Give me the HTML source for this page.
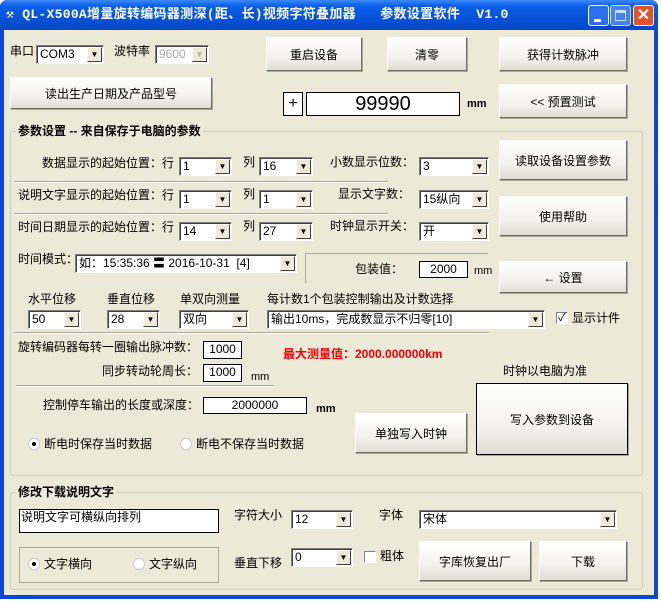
<!DOCTYPE html>
<html><head><meta charset="utf-8"><style>
*{box-sizing:border-box;margin:0;padding:0}
body{width:661px;height:601px;overflow:hidden;background:#fff;font-family:"Liberation Sans","Noto Sans CJK SC",sans-serif;font-size:12px;color:#000;position:relative}
.win{position:absolute;left:0;top:0;width:658px;height:599px;background:#0a47d6;border-radius:7px 7px 0 0}
.title{position:absolute;left:0;top:0;width:658px;height:30px;border-radius:7px 7px 0 0;background:linear-gradient(#3d8af7 0%,#0a5fe9 20%,#0752d8 60%,#0a47c8 100%)}
.body{position:absolute;left:4px;top:30px;width:650px;height:565px;background:#ece9d8}
.a{position:absolute;white-space:nowrap;line-height:14px;font-size:12px}
.btn{position:absolute;background:linear-gradient(#fff,#f3f2ec 60%,#e0ded3);border:1px solid #7f9db9;border-color:#fff #716f64 #716f64 #fff;box-shadow:1px 1px 0 #aca899;display:flex;align-items:center;justify-content:center;font-size:12px}
.cb{position:absolute;height:19px;background:#fff;border:1px solid;border-color:#7f7f7f #fff #fff #7f7f7f;box-shadow:inset 1px 1px 0 #404040;font-size:12px;line-height:16px;padding-left:3px;overflow:hidden}
.cb i{position:absolute;right:1px;top:1px;width:15px;height:15px;background:#ece9d8;border:1px solid;border-color:#fff #404040 #404040 #fff;font-style:normal;font-size:8px;text-align:center;line-height:13px}
.in{position:absolute;background:#fff;border:1px solid #000;text-align:center;font-size:12px;line-height:15px}
.grp{position:absolute;border:1px solid #d0d0bf;border-radius:3px}
.gt{position:absolute;background:#ece9d8;font-weight:bold;font-size:12px;padding:0 2px;line-height:14px}
.sep{position:absolute;height:2px;border-top:1px solid #aca899;border-bottom:1px solid #fff}
.rad{position:absolute;width:12px;height:12px;border-radius:50%;background:#fff;border:1px solid #ccc}
.rad.on::after{content:"";position:absolute;left:3px;top:3px;width:4px;height:4px;border-radius:50%;background:#000}
.chk{position:absolute;width:12px;height:12px;background:#fff;border:1px solid;border-color:#808080 #fff #fff #808080;font-size:11px;line-height:10px;text-align:center}
</style></head><body>
<div class="win"></div>
<div class="title"></div>
<div class="a" style="left:6px;top:8px;color:#fff;font-size:13px;font-weight:bold;letter-spacing:0.3px;font-family:'Liberation Mono','Noto Sans CJK SC',monospace">⚒ QL-X500A增量旋转编码器测深(距、长)视频字符叠加器&nbsp;&nbsp;&nbsp;参数设置软件&nbsp;&nbsp;V1.0</div>
<div style="position:absolute;left:588px;top:5px;width:21px;height:21px;border:1px solid #fff;border-radius:3px;background:#2b6ff0"><div style="position:absolute;left:5px;top:13px;width:7px;height:3px;background:#fff"></div></div>
<div style="position:absolute;left:610px;top:5px;width:21px;height:21px;border:1px solid #fff;border-radius:3px;background:#5a8df5;opacity:.8"><div style="position:absolute;left:4px;top:4px;width:11px;height:11px;border:1px solid #fff;border-top-width:3px"></div></div>
<div style="position:absolute;left:633px;top:5px;width:21px;height:21px;border:1px solid #fff;border-radius:3px;background:#e0542c;color:#fff;font-weight:bold;font-size:16px;text-align:center;line-height:19px">✕</div>
<div class="body"></div>

<div class="a" style="left:10px;top:44px">串口</div>
<div class="cb" style="left:36px;top:45px;width:68px">COM3<i>▼</i></div>
<div class="a" style="left:114px;top:44px">波特率</div>
<div class="cb" style="left:155px;top:45px;width:54px;color:#aaa;background:#fff">9600<i style="color:#aaa">▼</i></div>
<div class="btn" style="left:266px;top:37px;width:96px;height:34px">重启设备</div>
<div class="btn" style="left:387px;top:37px;width:80px;height:34px">清零</div>
<div class="btn" style="left:499px;top:37px;width:128px;height:34px">获得计数脉冲</div>
<div class="btn" style="left:10px;top:77px;width:202px;height:32px">读出生产日期及产品型号</div>
<div class="in" style="left:283px;top:92px;width:20px;height:24px;font-size:16px;line-height:21px">+</div>
<div class="in" style="left:306px;top:92px;width:154px;height:24px;font-size:20px;line-height:22px">99990</div>
<div class="a" style="left:467px;top:97px;font-weight:bold;font-size:11px">mm</div>
<div class="btn" style="left:499px;top:84px;width:128px;height:34px">&lt;&lt; 预置测试</div>

<div class="grp" style="left:10px;top:131px;width:633px;height:345px"></div>
<div class="gt" style="left:16px;top:124px">参数设置 -- 来自保存于电脑的参数</div>

<div class="a" style="left:42px;top:156px">数据显示的起始位置：行</div>
<div class="cb" style="left:179px;top:157px;width:53px">1<i>▼</i></div>
<div class="a" style="left:243px;top:155px">列</div>
<div class="cb" style="left:259px;top:157px;width:54px">16<i>▼</i></div>
<div class="a" style="left:330px;top:155px">小数显示位数：</div>
<div class="cb" style="left:419px;top:157px;width:70px">3<i>▼</i></div>
<div class="btn" style="left:499px;top:140px;width:128px;height:40px">读取设备设置参数</div>
<div class="sep" style="left:14px;top:181px;width:374px"></div>

<div class="a" style="left:18px;top:188px">说明文字显示的起始位置：行</div>
<div class="cb" style="left:179px;top:190px;width:53px">1<i>▼</i></div>
<div class="a" style="left:243px;top:187px">列</div>
<div class="cb" style="left:259px;top:190px;width:54px">1<i>▼</i></div>
<div class="a" style="left:338px;top:187px">显示文字数：</div>
<div class="cb" style="left:419px;top:190px;width:70px">15纵向<i>▼</i></div>
<div class="btn" style="left:499px;top:196px;width:128px;height:40px">使用帮助</div>
<div class="sep" style="left:14px;top:213px;width:374px"></div>

<div class="a" style="left:18px;top:220px">时间日期显示的起始位置：行</div>
<div class="cb" style="left:179px;top:222px;width:53px">14<i>▼</i></div>
<div class="a" style="left:243px;top:219px">列</div>
<div class="cb" style="left:259px;top:222px;width:54px">27<i>▼</i></div>
<div class="a" style="left:330px;top:219px">时钟显示开关：</div>
<div class="cb" style="left:419px;top:222px;width:70px">开<i>▼</i></div>

<div class="a" style="left:18px;top:252px">时间模式：</div>
<div class="cb" style="left:75px;top:254px;width:222px">如：15:35:36 〓 2016-10-31&nbsp;&nbsp;[4]<i>▼</i></div>
<div style="position:absolute;left:305px;top:253px;width:183px;height:1px;background:#aca899"></div>
<div style="position:absolute;left:305px;top:253px;width:1px;height:30px;background:#aca899"></div>
<div class="a" style="left:355px;top:262px">包装值：</div>
<div class="in" style="left:419px;top:261px;width:49px;height:17px">2000</div>
<div class="a" style="left:474px;top:264px;font-size:11px">mm</div>
<div class="btn" style="left:499px;top:261px;width:128px;height:32px">← 设置</div>

<div class="a" style="left:28px;top:292px">水平位移</div>
<div class="a" style="left:107px;top:292px">垂直位移</div>
<div class="a" style="left:180px;top:292px">单双向测量</div>
<div class="a" style="left:267px;top:292px">每计数1个包装控制输出及计数选择</div>
<div class="cb" style="left:28px;top:310px;width:53px">50<i>▼</i></div>
<div class="cb" style="left:107px;top:310px;width:53px">28<i>▼</i></div>
<div class="cb" style="left:179px;top:310px;width:70px">双向<i>▼</i></div>
<div class="cb" style="left:267px;top:310px;width:278px">输出10ms，完成数显示不归零[10]<i>▼</i></div>
<div class="chk" style="left:556px;top:312px">✓</div>
<div class="a" style="left:572px;top:311px">显示计件</div>
<div class="sep" style="left:14px;top:332px;width:475px"></div>

<div class="a" style="left:18px;top:340px">旋转编码器每转一圈输出脉冲数：</div>
<div class="in" style="left:203px;top:341px;width:39px;height:18px">1000</div>
<div class="a" style="left:283px;top:347px;color:#e00;font-weight:bold;font-size:12px">最大测量值：2000.000000km</div>
<div class="a" style="left:102px;top:364px">同步转动轮周长：</div>
<div class="in" style="left:203px;top:364px;width:39px;height:18px">1000</div>
<div class="a" style="left:251px;top:370px;font-size:11px">mm</div>
<div class="sep" style="left:16px;top:385px;width:258px"></div>
<div class="a" style="left:503px;top:364px">时钟以电脑为准</div>

<div class="a" style="left:43px;top:398px">控制停车输出的长度或深度：</div>
<div class="in" style="left:203px;top:397px;width:104px;height:17px">2000000</div>
<div class="a" style="left:316px;top:402px;font-size:11px;font-weight:bold">mm</div>
<div class="btn" style="left:476px;top:383px;width:152px;height:72px;border-color:#000 #000 #000 #000">写入参数到设备</div>
<div class="btn" style="left:355px;top:413px;width:112px;height:40px">单独写入时钟</div>
<div class="rad on" style="left:28px;top:438px"></div>
<div class="a" style="left:44px;top:437px">断电时保存当时数据</div>
<div class="rad" style="left:180px;top:438px"></div>
<div class="a" style="left:196px;top:437px">断电不保存当时数据</div>

<div class="grp" style="left:10px;top:492px;width:633px;height:98px"></div>
<div class="gt" style="left:16px;top:485px">修改下载说明文字</div>
<div class="in" style="left:19px;top:509px;width:200px;height:24px;text-align:left;padding-left:1px;line-height:14px">说明文字可横纵向排列</div>
<div class="a" style="left:234px;top:508px">字符大小</div>
<div class="cb" style="left:291px;top:510px;width:62px">12<i>▼</i></div>
<div class="a" style="left:379px;top:508px">字体</div>
<div class="cb" style="left:419px;top:510px;width:198px">宋体<i>▼</i></div>
<div style="position:absolute;left:19px;top:547px;width:200px;height:36px;border:1px solid #aca899"></div>
<div class="rad on" style="left:28px;top:558px"></div>
<div class="a" style="left:44px;top:557px">文字横向</div>
<div class="rad" style="left:133px;top:558px"></div>
<div class="a" style="left:149px;top:557px">文字纵向</div>
<div class="a" style="left:234px;top:556px">垂直下移</div>
<div class="cb" style="left:291px;top:548px;width:62px">0<i>▼</i></div>
<div class="chk" style="left:364px;top:551px"></div>
<div class="a" style="left:380px;top:549px">粗体</div>
<div class="btn" style="left:419px;top:541px;width:112px;height:40px">字库恢复出厂</div>
<div class="btn" style="left:539px;top:541px;width:88px;height:40px">下载</div>
</body></html>
